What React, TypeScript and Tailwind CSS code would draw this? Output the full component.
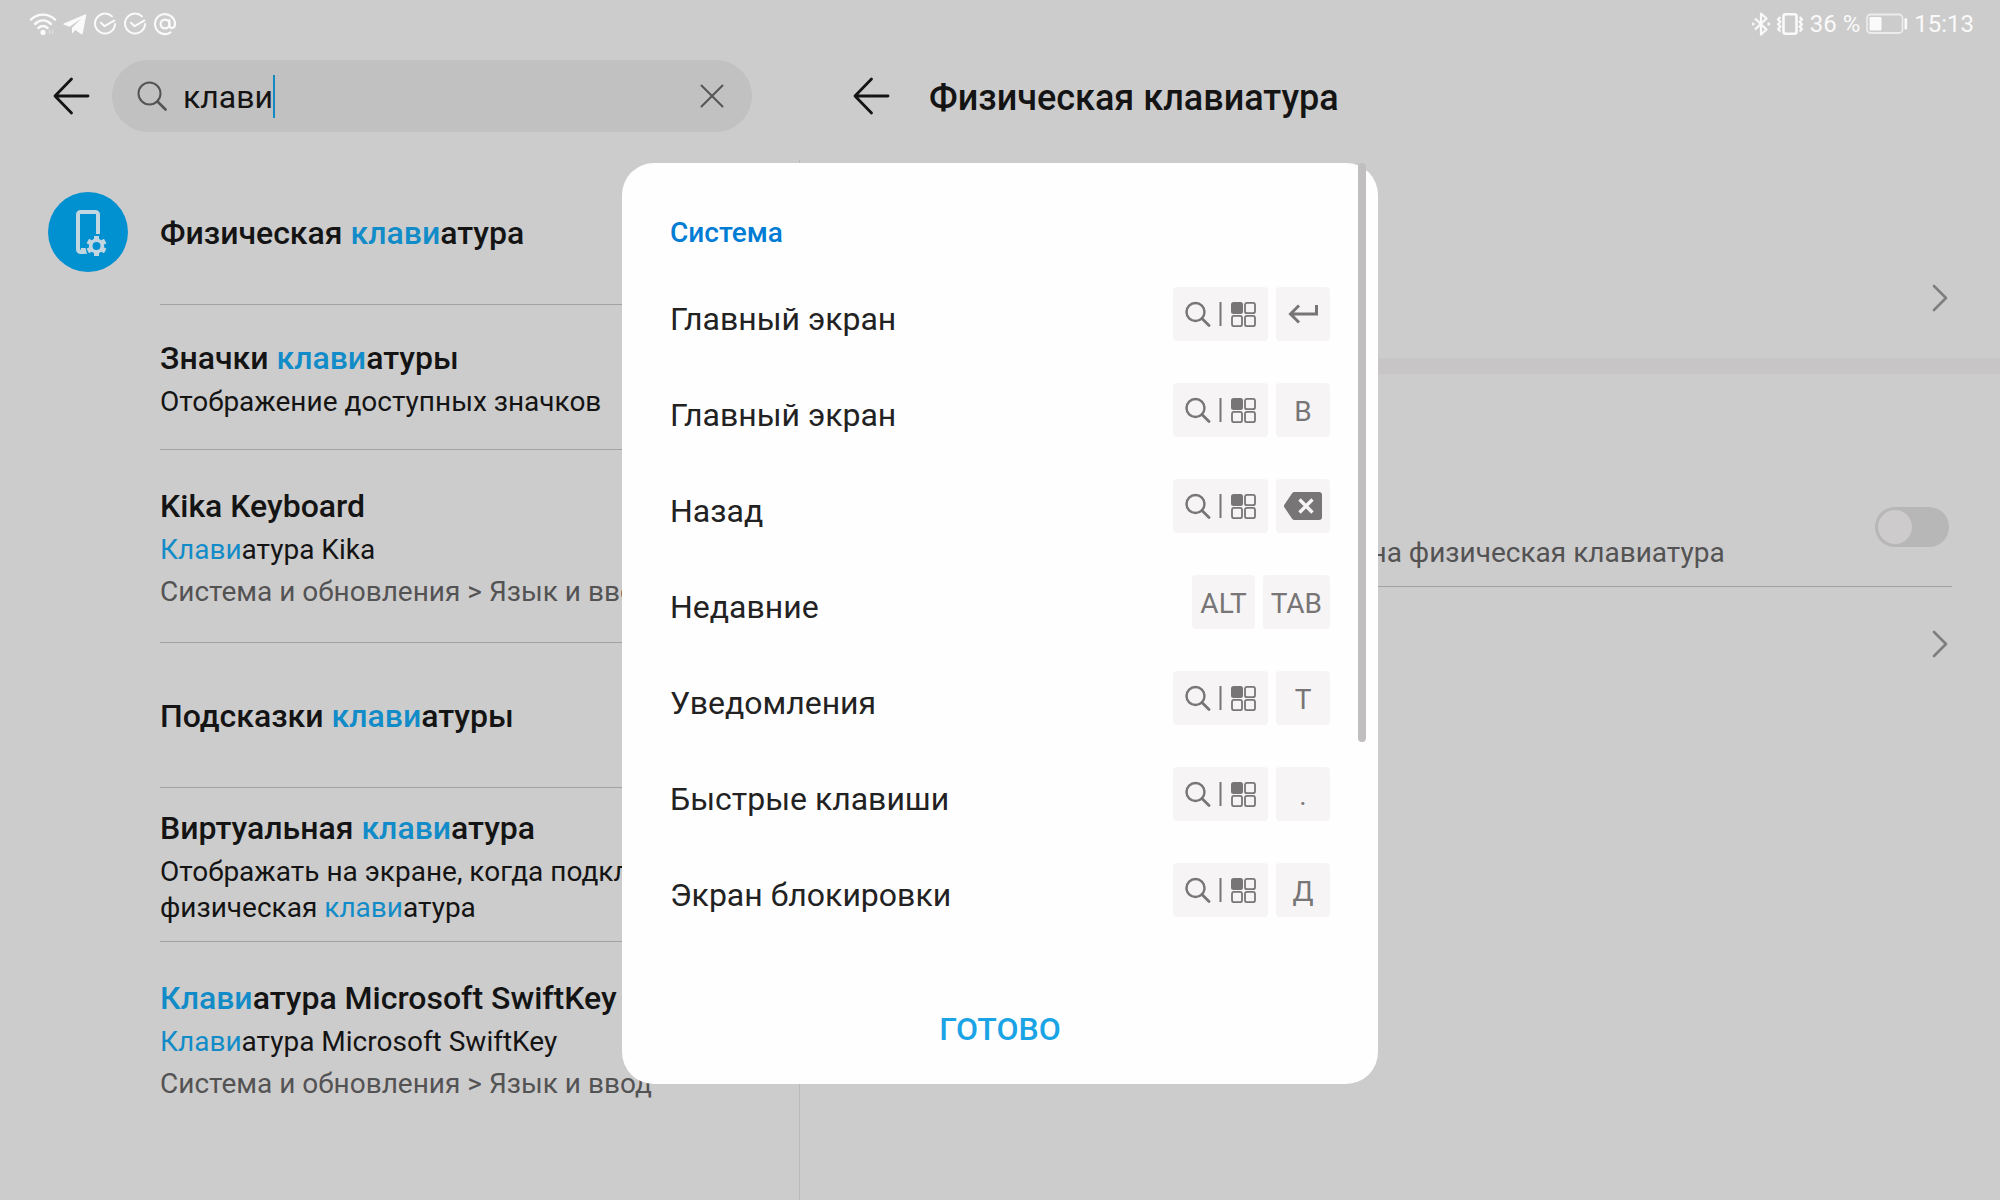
import React, { useState } from 'react';

interface SearchResult {
  id: string;
  title: string;
  summary?: string;
  path?: string;
  hasIcon?: boolean;
}

interface Shortcut {
  id: string;
  label: string;
  keys: string[];
}

const results: SearchResult[] = [
  { id: 'physical', title: 'Физическая клавиатура', hasIcon: true },
  { id: 'badges', title: 'Значки клавиатуры', summary: 'Отображение доступных значков' },
  { id: 'kika', title: 'Kika Keyboard', summary: 'Клавиатура Kika', path: 'Система и обновления > Язык и ввод' },
  { id: 'hints', title: 'Подсказки клавиатуры' },
  { id: 'virtual', title: 'Виртуальная клавиатура', summary: 'Отображать на экране, когда подключена физическая клавиатура' },
  { id: 'swiftkey', title: 'Клавиатура Microsoft SwiftKey', summary: 'Клавиатура Microsoft SwiftKey', path: 'Система и обновления > Язык и ввод' },
];

const shortcuts: Shortcut[] = [
  { id: 'home-enter', label: 'Главный экран', keys: ['meta', 'enter'] },
  { id: 'home-b', label: 'Главный экран', keys: ['meta', 'B'] },
  { id: 'back', label: 'Назад', keys: ['meta', 'backspace'] },
  { id: 'recent', label: 'Недавние', keys: ['ALT', 'TAB'] },
  { id: 'notifications', label: 'Уведомления', keys: ['meta', 'T'] },
  { id: 'hotkeys', label: 'Быстрые клавиши', keys: ['meta', '.'] },
  { id: 'lock', label: 'Экран блокировки', keys: ['meta', 'Д'] },
];

// Splits the text on the query and colours the matching parts
const Highlight: React.FC<{ text: string; query: string }> = ({ text, query }) => {
  if (!query) return <>{text}</>;
  const parts = text.split(new RegExp(`(${query})`, 'i'));
  return (
    <>
      {parts.map((part, i) =>
        part.toLowerCase() === query.toLowerCase() ? (
          <span key={i} className="text-[#128cc8]">{part}</span>
        ) : (
          part
        )
      )}
    </>
  );
};

const BackIcon = () => (
  <svg width="40" height="40" viewBox="0 0 40 40" fill="none" stroke="#141414" strokeWidth="2.8" strokeLinecap="round" strokeLinejoin="round">
    <path d="M37 20H4M20.500 3L4 20l16.500 17" />
  </svg>
);

const ChevronIcon = () => (
  <svg width="16" height="28" viewBox="0 0 16 28" fill="none" stroke="#7f7e7f" strokeWidth="2.6" strokeLinecap="round" strokeLinejoin="round">
    <path d="M2 2l12 12L2 26" />
  </svg>
);

const CheckCircleIcon = () => (
  <svg width="24" height="24" viewBox="0 0 24 24" fill="none" stroke="#fafafa" strokeWidth="2" strokeLinecap="round" strokeLinejoin="round">
    <path d="M19 4.4A10 10 0 1 0 22 12M8 10.8l3.6 3.4 9.6-5.6" />
  </svg>
);

const StatusBar = () => (
  <header className="flex h-12 items-center justify-between pr-[26px] pl-[29px] text-2xl text-[#fafafa]">
    <div className="flex items-center gap-1.5">
      <svg width="28" height="24" viewBox="0 0 28 24" fill="none" stroke="#fafafa" strokeWidth="2.4" strokeLinecap="round">
        <path d="M2 7.600C9 1 19 1 26 7.600M6 12c5-4.600 11-4.600 16 0M9.400 16c3-2.600 6.200-2.600 9.200 0" />
        <circle cx="14" cy="20.400" r="2.600" fill="#fafafa" stroke="none" />
        <path d="M20.500 21.500v-3m3 3v-3" strokeWidth="1.400" stroke="#dedede" />
      </svg>
      <svg width="24" height="24" viewBox="0 0 24 24" fill="#fafafa">
        <path d="M22.600 2.200L.8 11.600c-.6.300-.6 1 .1 1.200l5.600 1.900L18.500 6.400 9 15.800v6l3.300-3.700 5.700 3.800c.8.500 1.600.2 1.800-.700l3.400-18.100c.1-.7-.2-1-.6-.9z" />
      </svg>
      <CheckCircleIcon />
      <CheckCircleIcon />
      <svg width="24" height="24" viewBox="0 0 24 24" fill="none" stroke="#fafafa" strokeWidth="2.200" strokeLinecap="round">
        <circle cx="12" cy="12" r="4.400" />
        <path d="M16.400 8v5c0 4.400 5.600 4 5.600-1a10 10 0 1 0-4.500 8.400" />
      </svg>
    </div>
    <div className="flex items-center gap-1.5">
      <svg width="18" height="24" viewBox="0 0 18 24" fill="none" stroke="#fafafa" strokeWidth="2.200" strokeLinejoin="round">
        <path d="M3 6.500l11.500 11L9 22.500v-21l5.500 5-11.500 11" />
        <path d="M0 12h2.500M15.500 12H18" strokeWidth="2.600" />
      </svg>
      <svg width="28" height="24" viewBox="0 0 28 24" fill="none" stroke="#fafafa" strokeWidth="2.600" strokeLinejoin="round">
        <rect x="7.500" y="2.200" width="13" height="19.600" rx="2" />
        <path d="M4.400 5L2 7.400l2.400 2.400L2 12.200l2.400 2.400L2 17l2.400 2.400M23.600 5L26 7.400l-2.400 2.400 2.400 2.400-2.400 2.400L26 17l-2.400 2.400" strokeWidth="2.200" />
      </svg>
      <span>36 %</span>
      <svg width="42" height="22" viewBox="0 0 42 22" fill="none">
        <rect x="1" y="1.500" width="35.500" height="18.500" rx="3.500" stroke="#ebebeb" strokeWidth="1.800" />
        <rect x="3.500" y="4" width="12" height="13.500" rx="1" fill="#fafafa" />
        <rect x="38.500" y="5" width="2.600" height="11.500" rx="1.300" fill="#fafafa" />
      </svg>
      <time>15:13</time>
    </div>
  </header>
);

const ResultIcon = () => (
  <div className="flex h-20 w-20 items-center justify-center rounded-full bg-[#0190d0]">
    <svg width="48" height="48" viewBox="0 0 48 48" fill="none">
      <path d="M34 26V6.500A2.500 2.500 0 0 0 31.500 4h-15A2.500 2.500 0 0 0 14 6.500v35a2.500 2.500 0 0 0 2.500 2.500H21" stroke="#c3d6e0" strokeWidth="4" />
      <path d="M16 45l1-5h4.500l1.500 6z" fill="#c3d6e0" />
      <circle cx="32.500" cy="38" r="5.800" stroke="#c3d6e0" strokeWidth="3.600" />
      <g stroke="#c3d6e0" strokeWidth="5">
        <path d="M32.500 28v3.500M32.500 44.500V48M23.800 33l3 1.700M38.200 41.300l3 1.700M41.200 33l-3 1.700M26.800 41.300l-3 1.700" />
      </g>
    </svg>
  </div>
);

const MetaKey = () => (
  <kbd className="flex h-[54px] items-center rounded bg-[#f6f4f5] px-3">
    <svg width="71" height="26" viewBox="0 0 71 26" fill="none" stroke="#777576">
      <circle cx="10.500" cy="11" r="9" strokeWidth="2.400" />
      <path d="M17 17.500l7 7" strokeWidth="2.800" strokeLinecap="round" />
      <path d="M35.500 1v24" strokeWidth="2" />
      <rect x="46" y="1" width="12" height="12" rx="2.500" fill="#777576" stroke="none" />
      <rect x="60" y="1.800" width="10" height="10.400" rx="2" strokeWidth="1.800" />
      <rect x="47" y="14.800" width="10" height="10.400" rx="2" strokeWidth="1.800" />
      <rect x="60" y="14.800" width="10" height="10.400" rx="2" strokeWidth="1.800" />
    </svg>
  </kbd>
);

const Key: React.FC<{ name: string }> = ({ name }) => {
  if (name === 'meta') return <MetaKey />;
  return (
    <kbd className="flex h-[54px] min-w-[54px] items-center justify-center rounded bg-[#f6f4f5] px-2 font-[Roboto,sans-serif] text-[28px] leading-10 text-[#777576]">
      {name === 'enter' && (
        <svg width="30" height="20" viewBox="0 0 30 20" fill="none" stroke="#777576" strokeWidth="3">
          <path d="M28.500 1v9H2.500M11 1.500L2.500 10l8.500 8.500" />
        </svg>
      )}
      {name === 'backspace' && (
        <svg width="38" height="28" viewBox="0 0 38 28">
          <path d="M10.500 0H35a3 3 0 0 1 3 3v22a3 3 0 0 1-3 3H10.500a3 3 0 0 1-2.400-1.200L.5 15.500a2.500 2.500 0 0 1 0-3L8.100 1.200A3 3 0 0 1 10.500 0z" fill="#777576" />
          <path d="M15.500 7.500l13 13M28.500 7.500l-13 13" stroke="#f6f4f5" strokeWidth="3.400" />
        </svg>
      )}
      {name !== 'enter' && name !== 'backspace' && <span className="pt-1">{name}</span>}
    </kbd>
  );
};

const ShortcutsDialog: React.FC<{ onClose: () => void }> = ({ onClose }) => (
  <div className="fixed inset-0 flex items-center justify-center pt-[46px]">
    <section role="dialog" aria-labelledby="shortcuts-title" className="relative w-full max-w-[756px] rounded-[32px] bg-[#fefefe] px-12 pt-[50px] pb-[27px]">
      <h2 id="shortcuts-title" className="mb-[13px] text-[28px] leading-10 font-medium text-[#007cd5]">Система</h2>
      <ul>
        {shortcuts.map(shortcut => (
          <li key={shortcut.id} className="flex h-24 items-center justify-between">
            <span className="pt-2.5 text-[32px] leading-10 text-[#232223]">{shortcut.label}</span>
            <span className="flex gap-2">
              {shortcut.keys.map(key => <Key key={key} name={key} />)}
            </span>
          </li>
        ))}
      </ul>
      <div className="mt-[63px] flex justify-center">
        <button onClick={onClose} className="px-6 py-2 text-[32px] leading-10 font-medium text-[#1aa4e6]">ГОТОВО</button>
      </div>
      <div className="absolute top-0 right-3 h-[579px] w-2 rounded-full bg-[#c0bebf]" />
    </section>
  </div>
);

const App: React.FC = () => {
  const [query, setQuery] = useState('клави');
  const [dialogOpen, setDialogOpen] = useState(true);
  const [showOnScreen, setShowOnScreen] = useState(false);

  return (
    <div className="flex min-h-screen flex-col bg-[#cdcccc] font-[Roboto,sans-serif] text-[#141414]">
      <StatusBar />
      <div className="flex grow">
        <aside className="flex w-2/5 flex-col">
          <div className="flex items-center gap-[21px] pt-3 pr-12 pb-7 pl-[51px]">
            <button aria-label="Назад"><BackIcon /></button>
            <div className="flex h-[72px] min-w-0 grow items-center rounded-full bg-[#c2c1c1] pr-6 pl-[25px]">
              <svg width="30" height="30" viewBox="0 0 30 30" fill="none" stroke="#545454" strokeLinecap="round">
                <circle cx="12.500" cy="12.500" r="11" strokeWidth="2" />
                <path d="M20.500 20.500l8 8" strokeWidth="2.600" />
              </svg>
              <input
                type="text"
                aria-label="Поиск настроек"
                value={query}
                onChange={e => setQuery(e.target.value)}
                className="ml-4 field-sizing-content pt-0.5 text-[32px] leading-10 outline-none"
              />
              <span className="h-[43px] w-0.5 bg-[#1489c2]" />
              <button aria-label="Очистить" className="ml-auto px-1" onClick={() => setQuery('')}>
                <svg width="24" height="24" viewBox="0 0 24 24" fill="none" stroke="#545454" strokeWidth="2" strokeLinecap="round">
                  <path d="M1.500 1.500l21 21M22.500 1.500l-21 21" />
                </svg>
              </button>
            </div>
          </div>
          <ul className="grow border-r border-[#bbb9ba]">
            {results.map((result, i) => (
              <li key={result.id} className="flex pl-12">
                <div className="w-28 shrink-0 pt-8">
                  {result.hasIcon && <ResultIcon />}
                </div>
                <div className={`flex min-h-[145px] grow flex-col justify-center border-b pt-0.5 pr-12 ${i < results.length - 1 ? 'border-[#a3a1a2]' : 'border-transparent'} ${result.path ? 'h-[193px]' : ''} ${result.id === 'virtual' ? 'h-[154px]' : ''}`}>
                  <h3 className="text-[32px] leading-[44px] font-medium"><Highlight text={result.title} query={query} /></h3>
                  {result.summary && (
                    <p className="mt-1 text-[28px] leading-9"><Highlight text={result.summary} query={query} /></p>
                  )}
                  {result.path && <p className="mt-1.5 text-[28px] leading-9 text-[#545354]">{result.path}</p>}
                </div>
              </li>
            ))}
          </ul>
        </aside>
        <main className="min-w-0 grow">
          <div className="flex h-24 items-center gap-[38px] pl-[51px]">
            <button aria-label="Назад"><BackIcon /></button>
            <h1 className="pt-1 text-4xl leading-[44px] font-medium">Физическая клавиатура</h1>
          </div>
          <div className="mt-[94px] flex h-[120px] items-center justify-end pr-[52px]">
            <button aria-label="Открыть"><ChevronIcon /></button>
          </div>
          <div className="h-4 bg-[#c7c5c6]" />
          <div className="mx-12 mt-[93px] flex h-[120px] items-center justify-between border-b border-[#a3a1a2] pr-[3px]">
            <label htmlFor="show-keyboard" className="pt-[52px] text-[28px] leading-9 text-[#545354]">
              Отображать на экране, когда подключена физическая клавиатура
            </label>
            <input
              id="show-keyboard"
              type="checkbox"
              role="switch"
              checked={showOnScreen}
              onChange={e => setShowOnScreen(e.target.checked)}
              className="h-10 w-[74px] shrink-0 appearance-none rounded-full bg-[#b8b7b7] p-[3px] before:block before:h-[34px] before:w-[34px] before:rounded-full before:bg-[#cdcbcc] checked:bg-[#1489c2] checked:before:ml-[34px]"
            />
          </div>
          <div className="flex h-[114px] items-center justify-end pr-[52px]">
            <button aria-label="Открыть"><ChevronIcon /></button>
          </div>
        </main>
      </div>
      {dialogOpen && <ShortcutsDialog onClose={() => setDialogOpen(false)} />}
    </div>
  );
};

export default App;
